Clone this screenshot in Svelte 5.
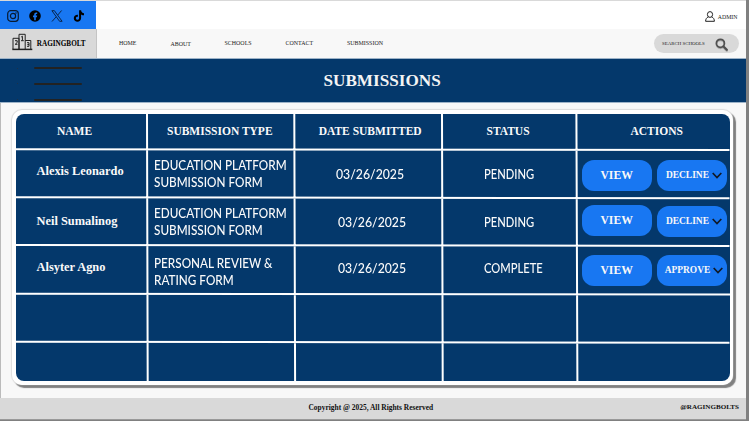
<script>
  const nav = [
    { label: 'HOME', left: 119, y: 0 },
    { label: 'ABOUT', left: 170.5, y: 0.7 },
    { label: 'SCHOOLS', left: 224.5, y: 0 },
    { label: 'CONTACT', left: 285.5, y: 0 },
    { label: 'SUBMISSION', left: 347, y: 0 }
  ];
  const slots = nav.map((item, i) => ({
    ...item,
    width: (i < nav.length - 1 ? nav[i + 1].left : 420) - item.left
  }));
  const heads = ['NAME', 'SUBMISSION TYPE', 'DATE SUBMITTED', 'STATUS', 'ACTIONS'];
  const rows = [
    { name: 'Alexis Leonardo', nameTop: 13.5, type: ['EDUCATION PLATFORM', 'SUBMISSION FORM'], typeTop: 8, date: '03/26/2025', dateLeft: 41.5, valTop: 16.5, status: 'PENDING', action: 'DECLINE', viewTop: 10.5, actTop: 10.5 },
    { name: 'Neil Sumalinog', nameTop: 16, type: ['EDUCATION PLATFORM', 'SUBMISSION FORM'], typeTop: 7.8, date: '03/26/2025', dateLeft: 43.5, valTop: 17, status: 'PENDING', action: 'DECLINE', viewTop: 8, actTop: 9.3 },
    { name: 'Alsyter Agno', nameTop: 13.5, type: ['PERSONAL REVIEW &', 'RATING FORM'], typeTop: 9.5, date: '03/26/2025', dateLeft: 43.5, valTop: 14.7, status: 'COMPLETE', action: 'APPROVE', viewTop: 9.8, actTop: 10 }
  ];
</script>

<div class="page">
  <div class="top">
    <div class="social">
      <svg width="12" height="12" viewBox="0 0 12 12" fill="none" stroke="#081a30" stroke-width="1.2">
        <rect x=".7" y=".7" width="10.6" height="10.6" rx="3" /><circle cx="6" cy="6" r="2.6" /><circle cx="9" cy="3" r=".45" fill="#081a30" stroke-width=".5" />
      </svg>
      <svg width="12" height="12" viewBox="0 0 12 12"><circle cx="6" cy="6" r="5.8" fill="#000" /><path d="M5.2 10.200V7.200H4V5.600h1.200V4.600c0-1.400.8-2.100 2-2.100l1 .1v1.300h-.6c-.6 0-.8.4-.8.800v.9h1.400l-.3 1.600H6.800v3z" fill="#1877f2" /></svg>
      <svg width="12" height="12" viewBox="0 0 12 12" fill="none" stroke="#0a1d38"><path d="M.9.7h2.500l7.700 10.600H8.600z" stroke-width=".9" /><path d="M10.600.5 6.700 5.100M5.200 6.800 1 11.500" stroke-width=".9" /></svg>
      <svg width="12" height="12" viewBox="0 0 12 12"><path d="M6.100.3h2c.2 1.700 1.200 2.800 2.900 3v2c-1.100 0-2-.3-2.900-.9v3.700c0 2.400-1.700 3.700-3.600 3.700C2.500 11.800.8 10.300.8 8.300c0-2.200 1.800-3.700 4.100-3.500v2.100c-1.200-.2-2 .4-2 1.400 0 .9.700 1.500 1.600 1.500 1 0 1.600-.7 1.600-1.800z" fill="#000" /></svg>
    </div>
    <div class="admin">
      <svg width="10" height="11" viewBox="0 0 10 11" fill="none" stroke="#222" stroke-width="1"><ellipse cx="5" cy="3.500" rx="2.600" ry="2.900" /><path d="M3.400 5.900C1.500 6.700.7 8 .6 10.300h8.800C9.300 8 8.500 6.700 6.600 5.900" /></svg>
      <span>ADMIN</span>
    </div>
  </div>

  <div class="bar">
    <div class="brand">
      <svg width="21" height="18" viewBox="0 0 21 18" fill="none" stroke="#222" stroke-width="1">
        <path d="M1 16V5.300h6V16M7 16V1.300h6.200V16M13.200 7.500h5.600V16" /><path d="M.3 16.400h20" stroke-width="1.500" />
        <path d="M3 7.700h2.200v1.800L3.200 11.300h2.300M9.200 4l1.200-.8v4.300M9 7.700h2.800M15 9.700h2v3.600h-2M15.400 11.500H17" />
      </svg>
      <span>RAGINGBOLT</span>
    </div>
    <nav>
      {#each slots as item}
        <a style:width="{item.width}px" style:padding-top="{item.y * 2}px">{item.label}</a>
      {/each}
    </nav>
    <div class="search">
      <span>SEARCH SCHOOLS</span>
      <svg width="13" height="13" viewBox="0 0 13 13" fill="none" stroke="#505050"><circle cx="5.400" cy="5.300" r="4" stroke-width="1.700" /><path d="m8.500 8.500 3.300 3.300" stroke-width="2.200" stroke-linecap="round" /></svg>
    </div>
  </div>

  <div class="banner">
    <ul class="lines"><li></li><li></li><li></li></ul>
    <h1>SUBMISSIONS</h1>
  </div>

  <main>
    <div class="card">
      <div class="table">
        <svg class="rules" width="714" height="267" viewBox="0 0 714 267" stroke="#fff" stroke-width="2">
          <path d="M0 35.200 713.500 36M0 83.300l713.500.9M0 131l713.500.9M0 179.700l717 .8M0 227.800l713.500.9M131 0l.7 267M278.300 0l.8 267M426 0l.7 267M560.400 0l1 267" />
        </svg>
        {#each heads as head, i}
          <div class="cell head h{i}">{head}</div>
        {/each}
        {#each rows as row}
          <div class="cell name" style:padding-top="{row.nameTop}px">{row.name}</div>
          <div class="cell type" style:padding-top="{row.typeTop}px">
            {#each row.type as line}<div class="narrow">{line}</div>{/each}
          </div>
          <div class="cell date" style:padding-top="{row.valTop}px" style:padding-left="{row.dateLeft}px"><div class="narrow">{row.date}</div></div>
          <div class="cell status" style:padding-top="{row.valTop}px"><div class="narrow">{row.status}</div></div>
          <div class="cell actions">
            <button class="view" style:margin-top="{row.viewTop}px">VIEW</button>
            <button class="pick" style:margin-top="{row.actTop}px">
              <span>{row.action}</span>
              <svg width="10" height="7" viewBox="0 0 10 7" fill="none" stroke="#111a26" stroke-width="1.700"><path d="M.7 1 5 5.500 9.300 1" /></svg>
            </button>
          </div>
        {/each}
      </div>
    </div>
  </main>

  <footer>
    <span class="copy">Copyright @ 2025, All Rights Reserved</span>
    <span class="handle">@RAGINGBOLTS</span>
  </footer>
</div>

<style>
  :global(body) { background: #808080; overflow: hidden; }
  .page {
    box-sizing: border-box;
    width: 745.500px;
    height: 420px;
    display: flex;
    flex-direction: column;
    border-top: 1px solid #d9d9d9;
    background: #f8f8f8;
    font-family: 'Liberation Serif', serif;
    box-shadow: inset 1px 0 #bbb;
    color: #222;
  }
  svg { display: block; flex: none; }
  .top { height: 28px; display: flex; justify-content: space-between; background: #fff; }
  .social { box-sizing: border-box; width: 96px; background: #1877f2; display: flex; gap: 10.300px; align-items: center; padding: 2px 0 0 6.500px; }
  .admin { display: flex; align-items: center; gap: 2.500px; padding: 3px 8px 0 0; font-size: 5.800px; }
  .bar { height: 30px; display: flex; align-items: center; box-sizing: border-box; border-bottom: 1px solid #9db3c8; }
  .brand {
    box-sizing: border-box; width: 97px; height: 29px; background: #d9d9d9; border-right: 1px solid #c4c4c4;
    display: flex; align-items: center; gap: 3.500px; padding-left: 12.300px; font-size: 7.200px; font-weight: bold; color: #000;
  }
  .brand svg { margin-top: -3px; }
  nav { display: flex; padding-left: 22px; font-size: 5.950px; line-height: 8px; }
  .search {
    box-sizing: border-box; margin-left: auto; margin-right: 6.500px; width: 85.500px; height: 19px; border-radius: 10px;
    background: #d9d9d9; display: flex; align-items: center; padding-left: 8.500px; gap: 10.500px; font-size: 4.900px;
  }
  .search svg { margin-top: 2px; filter: drop-shadow(0 1px .5px #aaa); }
  .banner { height: 43px; background: #04386b; display: flex; border-bottom: 1px solid #9db3c8; box-sizing: content-box; overflow: hidden; }
  .lines { margin: 0; padding: 8px 0 0 17px; list-style: none; display: flex; flex-direction: column; gap: 14.200px; width: 65px; }
  .lines li { height: 1.800px; flex: none; display: flex; justify-content: space-between; }
  .lines li::before { content: ''; width: 1px; height: 1px; margin-top: .5px; background: #1c3149; }
  .lines li::after { content: ''; width: 48px; border-radius: 1px; background: #222; }
  h1 { margin: 0 0 0 241.500px; font-size: 17.150px; line-height: 44px; color: #f4f4f4; }
  main { height: 295px; padding: 6.500px 0 0 12px; box-sizing: border-box; }
  .card { box-sizing: border-box; width: 721px; height: 275px; padding: 4px 4px; border-radius: 10px; background: #fff; box-shadow: 0 -1px 1px #ddd, -.5px 0 1px #ddd, 2.500px 2.500px 1px #808080; }
  .table {
    position: relative; width: 713.500px; height: 267px; border-radius: 8px; background: #04386b; color: #fafafa;
    display: grid; grid-template-columns: 131.500px 147px 148px 134px 153px; grid-template-rows: 35.500px 48px 48px 48px 48px 39px;
  }
  .rules { position: absolute; left: 0; top: 0; overflow: visible; }
  .cell { position: relative; box-sizing: border-box; white-space: nowrap; overflow: visible; }
  .head { font-weight: bold; font-size: 11.500px; line-height: 35px; }
  .h0 { padding-left: 41px; }
  .h1 { padding-left: 19.500px; }
  .h2 { padding-left: 24.200px; }
  .h3 { padding-left: 44px; }
  .h4 { padding-left: 54px; }
  .name { padding-left: 20.500px; font-weight: bold; font-size: 12.400px; line-height: 16px; }
  .narrow { transform-origin: left center; }
  .type { padding-left: 6px; font: 500 12.700px/17.200px Lato, sans-serif; }
  .type .narrow { transform: scaleX(.925); }
  .date, .status { font: 500 12.700px/17px Lato, sans-serif; }
  .date .narrow { transform: scaleX(.967); }
  .status { padding-left: 41px; }
  .status .narrow { transform: scaleX(.882); }
  .actions { display: flex; align-items: flex-start; gap: 4.500px; padding-left: 5.500px; }
  button {
    box-sizing: border-box; width: 70.300px; height: 31px; border: 0; border-radius: 12px; padding: 0; flex: none;
    background: #1877f2; color: #f8f8f8; font: bold 11.700px/31px 'Liberation Serif', serif;
  }
  .view { padding-right: 1px; }
  .pick { display: flex; align-items: center; justify-content: center; gap: 3px; padding-left: 4px; font-size: 9.450px; }
  footer { flex: 1; background: #d9d9d9; border-bottom: 1px solid #999; display: flex; font-weight: bold; font-size: 7.450px; line-height: 20.500px; color: #111; }
  .copy { margin-left: 308.500px; }
  .handle { margin-left: auto; margin-right: 6.500px; line-height: 18px; font-size: 7.100px; }
</style>
